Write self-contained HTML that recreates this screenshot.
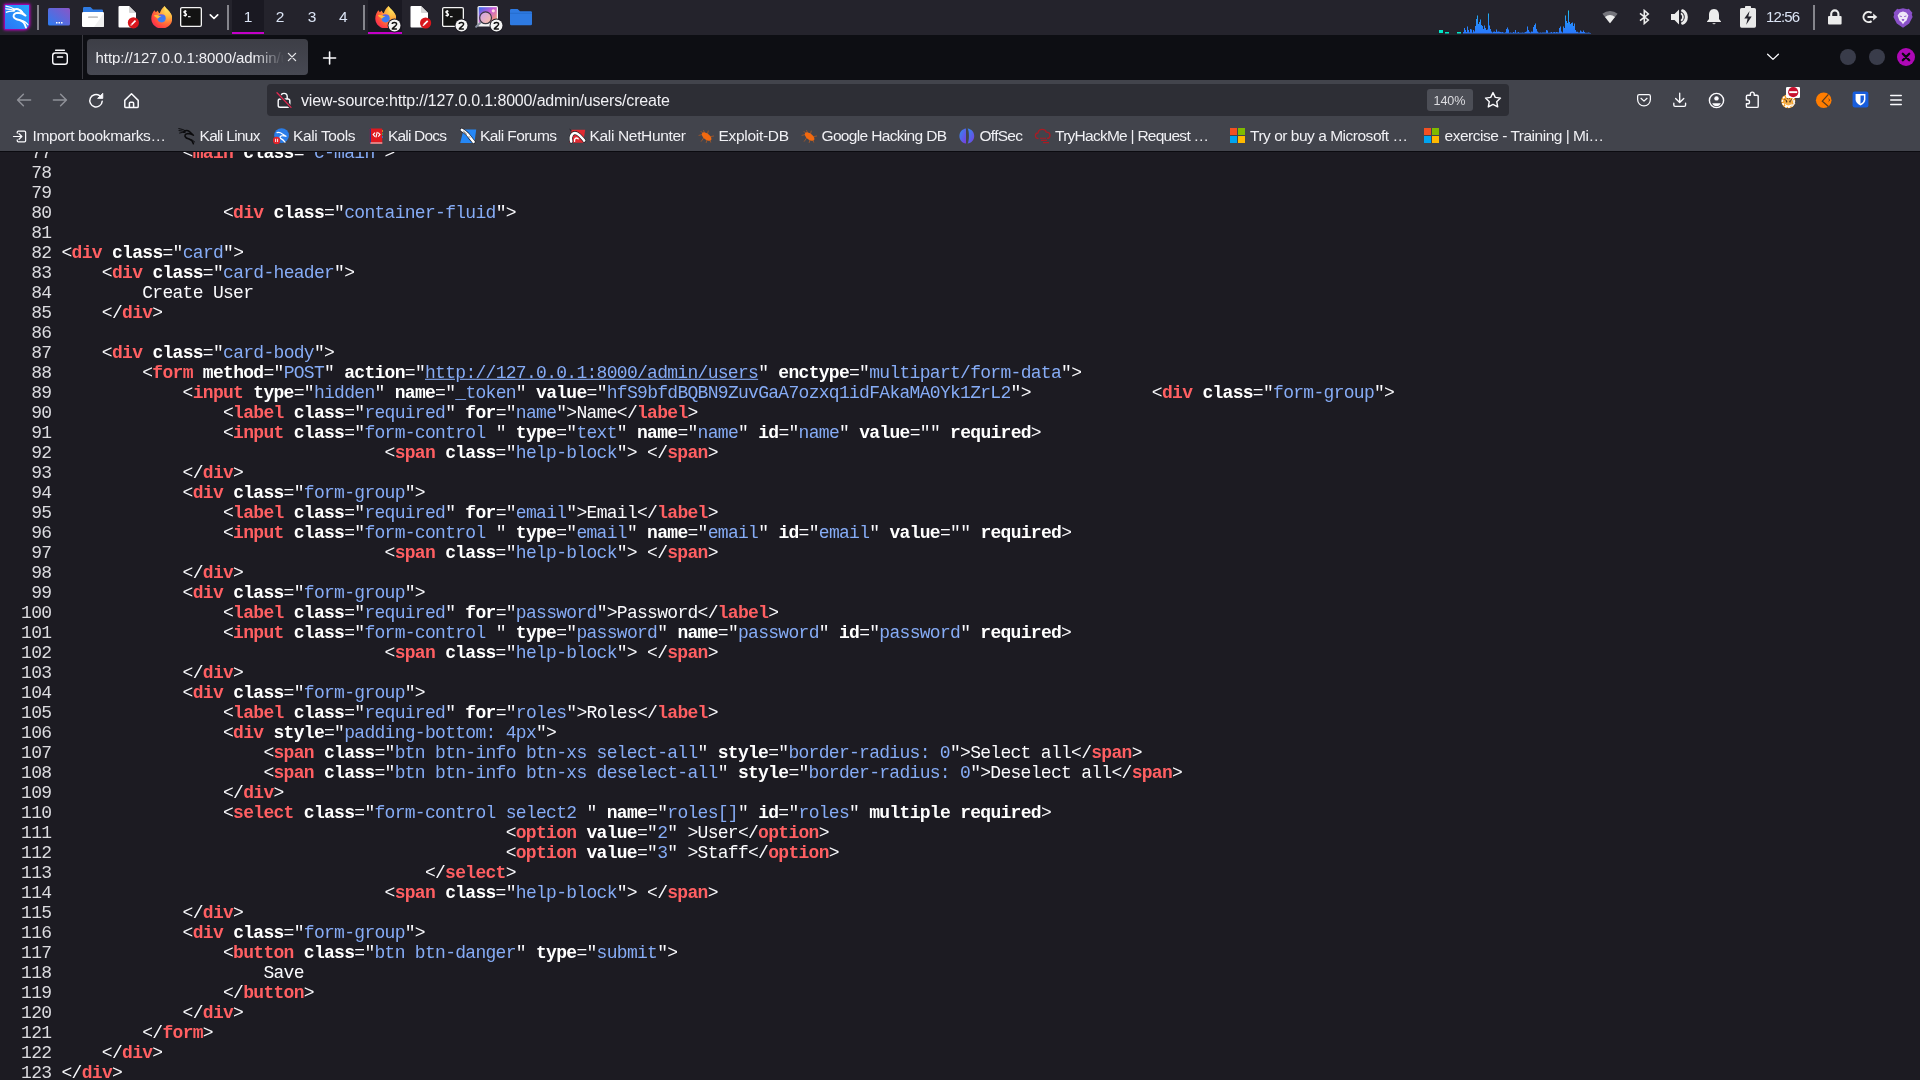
<!DOCTYPE html>
<html>
<head>
<meta charset="utf-8">
<title>view-source</title>
<style>
html,body{margin:0;padding:0;}
body{width:1920px;height:1080px;overflow:hidden;position:relative;background:#1c1b22;font-family:"Liberation Sans",sans-serif;}
#content{position:absolute;left:0;top:152px;width:1920px;height:928px;overflow:hidden;background:#1c1b22;}
#src{position:absolute;left:0;top:-9.2px;transform:scaleY(1.05263);transform-origin:0 0;margin:0;padding:0 0 0 21.1px;font-family:"Liberation Mono",monospace;font-size:18px;line-height:19px;color:#fbfbfe;white-space:pre;letter-spacing:-0.707px;}
#src b{font-weight:bold;color:#fff;}
#src b.t{color:#ff5f62;}
#src i{font-style:normal;color:#86acf6;}
#src u{text-decoration:underline;}
#src .n{color:#dcdce0;}
#panel{position:absolute;left:0;top:0;width:1920px;height:35px;background:#24232c;}
.a{position:absolute;display:block;}
.sep{position:absolute;top:5px;width:2px;height:25px;background:#85858c;}
#texts,#src{will-change:transform;}
.tx{position:absolute;white-space:pre;font-family:"Liberation Sans",sans-serif;}
#tabbar{position:absolute;left:0;top:35px;width:1920px;height:45px;background:#0d0e13;}
#nav{position:absolute;left:0;top:80px;width:1920px;height:71px;background:#42444c;}
#navline{position:absolute;left:0;top:151px;width:1920px;height:1px;background:#0b0b10;}
</style>
</head>
<body>
<svg width="0" height="0" style="position:absolute">
 <defs>
  <radialGradient id="gf1" cx=".8" cy=".2" r="1.050"><stop offset="0" stop-color="#ffe85a"/><stop offset=".3" stop-color="#ffb040"/><stop offset=".55" stop-color="#ff7139"/><stop offset=".8" stop-color="#ff3c42"/><stop offset="1" stop-color="#ea2a72"/></radialGradient>
  <linearGradient id="gf2" x1=".5" y1="0" x2=".5" y2="1"><stop offset="0" stop-color="#7a55dc"/><stop offset=".3" stop-color="#3f78f2"/><stop offset="1" stop-color="#3a80f5"/></linearGradient>
  <linearGradient id="gf3" x1=".5" y1="0" x2=".5" y2="1"><stop offset="0" stop-color="#fff36b"/><stop offset="1" stop-color="#ffa436"/></linearGradient>
  <symbol id="ffx" viewBox="0 0 21.500 22.500">
   <path d="M13.500,0C15,2.600 18.400,4.800 20,8C21.600,11 21.600,14.600 20,17.600C18,21 14.200,22.500 10.600,22.500C5,22.500 .3,18 .3,12.500C.3,9 1.800,6 3.500,4.200L4.800,6.300L6.800,4.500C7.200,6 7.900,6.900 8.800,7.300C9.500,5 11,2 13.500,0Z" fill="url(#gf1)"/>
   <path d="M13.500,0C15,2.600 18.400,4.800 20,8C21,10 21.400,12 21.200,14C20.600,10.600 17.400,9.600 15.600,7.600C14,5.800 13.300,3 13.500,0Z" fill="url(#gf3)" opacity=".9"/>
   <circle cx="10.600" cy="12.300" r="4.100" fill="url(#gf2)"/>
   <path d="M2.800,9.500C5,8.800 7,9.100 8.600,9.900L10.400,10.100C8.800,10.900 7.800,11.900 6.900,12.700C5.800,11.700 4,11.200 2.800,9.500Z" fill="#ffbe3a"/>
  </symbol>
  <symbol id="term" viewBox="0 0 22 20">
   <rect x=".65" y=".65" width="20.7" height="18.7" rx="1.300" fill="#131313" stroke="#f4f4f4" stroke-width="1.300"/>
   <path d="M6.600,4.400C5.800,3.700 3.800,3.800 3.800,5.100C3.800,6.500 6.600,6.000 6.600,7.500C6.600,8.900 4.400,8.900 3.600,8.100M5.200,3V9.800" fill="none" stroke="#fff" stroke-width="1.1"/>
   <path d="M8,9.700H10.600" stroke="#fff" stroke-width="1.1"/>
  </symbol>
  <symbol id="bdg" viewBox="0 0 15 15">
   <circle cx="7.500" cy="7.500" r="6.900" fill="#1b1a22"/>
   <circle cx="7.500" cy="7.500" r="6" fill="#f4f4f4"/>
   <path d="M5.200,6.000C5.300,3.900 9.700,3.900 9.600,6.200C9.500,7.700 6.800,8.800 5.300,10.900H9.900" fill="none" stroke="#111" stroke-width="1.500" stroke-linejoin="round"/>
  </symbol>
  <symbol id="ms" viewBox="0 0 15 15">
   <rect x="0" y="0" width="7" height="7" fill="#f25022"/><rect x="8" y="0" width="7" height="7" fill="#7fba00"/>
   <rect x="0" y="8" width="7" height="7" fill="#00a4ef"/><rect x="8" y="8" width="7" height="7" fill="#ffb900"/>
  </symbol>
  <symbol id="bug" viewBox="0 0 16 13">
   <ellipse cx="8.600" cy="6.600" rx="5.700" ry="3" transform="rotate(38 8.600 6.600)" fill="#f2690f"/>
   <path d="M4.500,4.500L1,5.400M5.600,8L3.300,11.300M9,9.800L8.200,12.600M11.600,9.400L12.700,12.200M12.600,6.600L15.800,6M9.600,3.600L10.200,1M6.600,3L5.600,.5M4.800,3.200L3,1.400" stroke="#f2690f" stroke-width=".8" fill="none" stroke-linecap="round" opacity=".6"/>
  </symbol>
 </defs>
</svg>
<div id="panel">
 <!-- kali menu -->
 <svg class="a" style="left:0;top:0" width="34" height="34" viewBox="-5 -5 34 34">
  <defs>
   <linearGradient id="gk" x1="0" y1="1" x2="1" y2="0"><stop offset="0" stop-color="#2a74f4"/><stop offset="1" stop-color="#27a6ff"/></linearGradient>
   <filter id="glow" x="-40%" y="-40%" width="180%" height="180%"><feGaussianBlur stdDeviation="1.5"/></filter>
  </defs>
  <path d="M-1,-1H25V18.500Q25,25 18.500,25H-1Z" fill="#d400d8" filter="url(#glow)"/>
  <path d="M-.7,-.7H24.700V18Q24.700,24.700 18,24.700H-.7Z" fill="#a000a8" opacity=".75"/>
  <path d="M0,0H24V18Q24,24 18,24H0Z" fill="url(#gk)"/>
  <g fill="none" stroke="#fff" stroke-linecap="round" stroke-linejoin="round">
   <path d="M1,1.200Q5.500,1.800 9.800,4.400M1,3.800Q5,4 9.400,5.400M1.400,7.200Q5,5.800 9,6.200" stroke-width="1.350"/>
   <path d="M9,4.600Q12,3.200 14.500,5L20.600,10.600Q17,8.200 13,7.800Q8.200,8.200 8.600,11.600Q9.600,14.200 14.500,15Q19.500,16.400 21,22.600" stroke-width="1.900"/>
   <path d="M15.500,15.300Q20.600,16 23,19.800" stroke-width="1.200"/>
   <path d="M14.200,4.600Q16.200,4.800 17.400,6.800" stroke-width="1.100"/>
  </g>
 </svg>
 <div class="sep" style="left:37px"></div>
 <!-- show desktop -->
 <svg class="a" style="left:48px;top:8px" width="22" height="18" viewBox="0 0 22 18">
  <defs><linearGradient id="gd" x1="0" y1="1" x2="1" y2="0"><stop offset="0" stop-color="#2b7df2"/><stop offset="1" stop-color="#8b55c6"/></linearGradient></defs>
  <rect x="0" y="0" width="22" height="17.5" rx="1.5" fill="url(#gd)"/>
  <rect x="8" y="14" width="1.5" height="1.5" fill="#fff"/><rect x="10.5" y="14" width="1.5" height="1.5" fill="#fff"/><rect x="13" y="14" width="1.5" height="1.5" fill="#fff"/>
 </svg>
 <!-- file manager -->
 <svg class="a" style="left:82px;top:7px" width="22" height="20" viewBox="0 0 22 20">
  <path d="M1,1.2Q1,0 2.2,0H8.5L11,2.6H19.8Q21,2.6 21,3.8V8H1Z" fill="#2f7be3"/>
  <rect x="0" y="5" width="22" height="15" rx="1.3" fill="#fff"/>
  <path d="M22,6V18.7Q22,20 20.7,20H12Z" fill="#f0f0f0"/>
  <rect x="6" y="9.3" width="10" height="1.7" rx=".85" fill="#c4c4c4"/>
 </svg>
 <!-- text editor -->
 <svg class="a" style="left:118px;top:6px" width="22" height="23" viewBox="0 0 22 23">
  <path d="M1.5,0H11L18,7V20.5Q18,21.5 17,21.5H1.5Q.5,21.5 .5,20.5V1Q.5,0 1.5,0Z" fill="#fff"/>
  <path d="M11,0L18,7H12Q11,7 11,6Z" fill="#d6d6d6"/>
  <circle cx="15.4" cy="16.8" r="5.6" fill="#d9161c"/>
  <path d="M13.700,18.500L17.500,14.700" stroke="#fff" stroke-width="1.700" stroke-linecap="butt"/><path d="M12.400,19.800L12.900,17.900L14.300,19.300Z" fill="#fff"/>
 </svg>
 <!-- firefox launcher -->
 <svg class="a" style="left:150.500px;top:5.800px" width="21.500" height="22.500" viewBox="0 0 21.500 22.500"><use href="#ffx"/></svg>
 <!-- terminal launcher -->
 <svg class="a" style="left:180px;top:7px" width="22" height="20" viewBox="0 0 22 20"><use href="#term"/></svg>
 <svg class="a" style="left:209px;top:13px" width="10" height="7" viewBox="0 0 10 7"><path d="M1.300,1.900L5,5.500L8.700,1.900" fill="none" stroke="#fff" stroke-width="1.7" stroke-linecap="round" stroke-linejoin="round"/></svg>
 <div class="sep" style="left:227px"></div>
 <div class="a" style="left:232px;top:0;width:32px;height:32px;background:#1a1922"></div>
 <div class="a" style="left:232px;top:32px;width:32px;height:2px;background:#c400c8"></div>
 <div class="sep" style="left:363px"></div>
 <div class="a" style="left:368px;top:0;width:34px;height:32px;background:#1a1922"></div>
 <div class="a" style="left:368px;top:32px;width:34px;height:2px;background:#c400c8"></div>
 <svg class="a" style="left:374.500px;top:5.800px" width="21.500" height="22.500" viewBox="0 0 21.500 22.500"><use href="#ffx"/></svg>
 <svg class="a" style="left:387px;top:18px" width="15" height="15" viewBox="0 0 15 15"><use href="#bdg"/></svg>
 <!-- text editor task -->
 <svg class="a" style="left:410px;top:6px" width="22" height="23" viewBox="0 0 22 23">
  <path d="M1.5,0H11L18,7V20.5Q18,21.5 17,21.5H1.5Q.5,21.5 .5,20.5V1Q.5,0 1.5,0Z" fill="#fff"/>
  <path d="M11,0L18,7H12Q11,7 11,6Z" fill="#d6d6d6"/>
  <circle cx="15.6" cy="17" r="5.6" fill="#d9161c"/>
  <path d="M13.900,18.700L17.700,14.900" stroke="#fff" stroke-width="1.700" stroke-linecap="butt"/><path d="M12.600,20L13.100,18.100L14.500,19.500Z" fill="#fff"/>
 </svg>
 <svg class="a" style="left:442px;top:7px" width="22" height="20" viewBox="0 0 22 20"><use href="#term"/></svg>
 <svg class="a" style="left:454px;top:18px" width="15" height="15" viewBox="0 0 15 15"><use href="#bdg"/></svg>
 <!-- image viewer -->
 <svg class="a" style="left:475px;top:5px" width="26" height="24" viewBox="0 0 26 24">
  <defs><linearGradient id="gi" x1="0" y1="0" x2="1" y2="1"><stop offset="0" stop-color="#2f6df0"/><stop offset=".45" stop-color="#c85ad8"/><stop offset="1" stop-color="#ffb45a"/></linearGradient>
  <linearGradient id="gm" x1="0" y1="0" x2="1" y2="1"><stop offset="0" stop-color="#c9a0f0"/><stop offset="1" stop-color="#ffc0a0"/></linearGradient></defs>
  <rect x="2.5" y="1" width="20.5" height="20.5" rx="1.5" fill="#f4f4f4"/>
  <rect x="3.7" y="2.2" width="18.1" height="15.5" fill="url(#gi)"/>
  <circle cx="18.3" cy="5.8" r="1.6" fill="#ffd8e0"/>
  <path d="M1.2,21.8L6.2,17" stroke="#8a8fa0" stroke-width="2" stroke-linecap="round"/>
  <circle cx="10.6" cy="12.8" r="5.9" fill="url(#gm)" stroke="#3a3a44" stroke-width="1.2"/>
 </svg>
 <svg class="a" style="left:489px;top:18px" width="15" height="15" viewBox="0 0 15 15"><use href="#bdg"/></svg>
 <!-- folder -->
 <svg class="a" style="left:510px;top:9px" width="22" height="17" viewBox="0 0 22 17">
  <path d="M0,1.3Q0,0 1.3,0H7.6L10,2.3H20.7Q22,2.3 22,3.6V15Q22,16.3 20.7,16.3H1.3Q0,16.3 0,15Z" fill="#2e7ae2"/>
  <path d="M0,4.3H22" stroke="#2569c8" stroke-width=".8"/>
 </svg>
 <!-- cpu graph -->
 <svg class="a" style="left:1436px;top:7.400px" width="158" height="27" viewBox="1436 8 158 27">
  <defs><linearGradient id="gc" x1="0" y1="1" x2="0" y2="0"><stop offset="0" stop-color="#2a78ff"/><stop offset=".55" stop-color="#2590fa"/><stop offset="1" stop-color="#1fc4ee"/></linearGradient></defs>
  <rect x="1439" y="31" width="4" height="3" fill="#00e8c8"/><rect x="1445" y="33" width="4" height="1.5" fill="#00e8c8"/><rect x="1457" y="33" width="4" height="1.5" fill="#00e8c8"/>
  <path id="cpup" d="M1463,34.6V33.0h1V29.0h1V31.0h1V33.0h1V27.5h1V31.0h1V33.2h1V30.0h1V30.5h1V33.4h1V31.0h1V32.6h1V27.0h1V20.0h1V16.5h1V25.0h1V23.0h1V20.5h1V26.0h1V27.0h1V30.0h1V26.5h1V29.0h1V31.0h1V30.5h1V14.5h1V26.5h1V30.0h1V32.6h1V33.6h1V32.8h1V32.6h1V33.0h1V30.5h1V32.8h1V32.6h1V32.8h1V33.0h1V33.2h1V33.0h1V33.4h1V33.8h1V33.2h1V30.0h1V28.5h1V30.5h1V33.8h1V33.4h1V33.8h1V33.8h1V33.0h1V33.4h1V31.0h1V33.8h1V33.4h1V33.0h1V33.8h1V33.8h1V33.8h1V33.4h1V33.8h1V33.4h1V33.0h1V32.6h1V27.5h1V31.0h1V32.8h1V33.4h1V32.6h1V32.8h1V28.0h1V26.0h1V24.5h1V30.0h1V32.6h1V33.4h1V33.8h1V33.6h1V33.8h1V33.6h1V33.4h1V33.4h1V33.4h1V31.0h1V31.5h1V33.8h1V33.8h1V33.6h1V33.0h1V33.8h1V33.2h1V33.0h1V33.6h1V33.0h1V33.2h1V33.4h1V29.0h1V27.5h1V32.6h1V33.6h1V27.5h1V29.0h1V16.5h1V22.0h1V24.0h1V11.5h1V23.0h1V25.0h1V24.0h1V23.5h1V27.0h1V24.5h1V31.0h1V32.8h1V32.8h1V33.6h1V33.6h1V31.5h1V32.5h1V33.0h1V31.5h1V33.0h1V33.8h1V33.8h1V33.8h1V33.4h1V33.8h1V34.0h1V34.6Z" fill="url(#gc)"/>
 </svg>
 <!-- wifi -->
 <svg class="a" style="left:1602px;top:10px" width="16" height="14" viewBox="0 0 16 14">
  <path d="M8,13.2L.4,3.8A12,12 0 0 1 15.6,3.8Z" fill="#75757c"/>
  <path d="M8,13.2L3,7A8,8 0 0 1 13,7Z" fill="#ececec"/>
 </svg>
 <!-- bluetooth -->
 <svg class="a" style="left:1638px;top:9px" width="13" height="16" viewBox="0 0 13 16">
  <path d="M2,4.3L10.3,11L6.3,14.5V1.5L10.3,5L2,11.7" fill="none" stroke="#ececec" stroke-width="1.6" stroke-linejoin="miter"/>
 </svg>
 <!-- volume -->
 <svg class="a" style="left:1670px;top:8px" width="19" height="18" viewBox="0 0 19 18">
  <path d="M1,6H4.5L9,1.5V16.5L4.5,12H1Z" fill="#ececec"/>
  <path d="M11,5.2A4.6,4.6 0 0 1 11,12.8" fill="none" stroke="#ececec" stroke-width="1.8"/>
  <path d="M11.2,1.4A8.2,8.2 0 0 1 11.2,16.6L11.2,14.6A6.2,6.2 0 0 0 11.2,3.4Z" fill="#ececec"/>
  <path d="M12,2A7.6,7.6 0 0 1 12,16" fill="none" stroke="#ececec" stroke-width="2.4"/>
 </svg>
 <!-- bell -->
 <svg class="a" style="left:1706px;top:8px" width="16" height="18" viewBox="0 0 16 18">
  <path d="M8,1C4.4,1 3,4 3,7V11L1,13.6V14H15V13.6L13,11V7C13,4 11.6,1 8,1Z" fill="#ececec"/>
  <path d="M6.3,15.3A1.8,1.4 0 0 0 9.7,15.3Z" fill="#ececec"/>
 </svg>
 <!-- battery -->
 <svg class="a" style="left:1740px;top:5px" width="16" height="23" viewBox="0 0 16 23">
  <rect x="0" y="3" width="16" height="19.7" rx="1.6" fill="#e9e9e9"/>
  <rect x="5" y="1" width="6" height="3" rx=".8" fill="#e9e9e9"/>
  <path d="M9.6,6L4.3,13.4H7.6L6.2,19.8L11.7,11.6H8.3Z" fill="#24232c"/>
 </svg>
 <div class="sep" style="left:1813px"></div>
 <!-- lock -->
 <svg class="a" style="left:1827px;top:8px" width="16" height="18" viewBox="0 0 16 18">
  <rect x="1" y="8" width="13.6" height="8.6" rx="1" fill="#ececec"/>
  <path d="M4.2,9V6A3.6,3.6 0 0 1 11.4,6V9" fill="none" stroke="#ececec" stroke-width="2.1"/>
 </svg>
 <!-- logout -->
 <svg class="a" style="left:1861px;top:9px" width="18" height="16" viewBox="0 0 18 16">
  <path d="M10.6,3.9A5.1,5.1 0 1 0 10.6,12.1" fill="none" stroke="#ececec" stroke-width="2"/>
  <path d="M6.5,8H13" stroke="#ececec" stroke-width="2"/>
  <path d="M12.2,4.6L16.3,8L12.2,11.4Z" fill="#ececec"/>
 </svg>
 <!-- lion -->
 <svg class="a" style="left:1892px;top:8px" width="22" height="20" viewBox="0 0 22 20">
  <path d="M11,.3L15.2,1.2L16.8,.8L20.4,4.8L19.8,6.6L20.6,9L17.2,15.6L11,19.7L4.8,15.6L1.4,9L2.2,6.6L1.6,4.8L5.2,.8L6.8,1.2Z" fill="#8a50c8"/>
  <path d="M11,3.6L14.2,4.4L16.4,7.6L14.6,12.4L12.4,14.2L11,16.2L9.6,14.2L7.4,12.4L5.6,7.6L7.8,4.4Z" fill="#efe6f8"/>
  <path d="M7.6,8L9.8,8.6M14.4,8L12.2,8.6M10,11.6H12L11,12.8Z" stroke="#8a50c8" stroke-width=".9" fill="#8a50c8"/>
 </svg>
</div>
<div id="tabbar">
 <!-- firefox view -->
 <svg class="a" style="left:51px;top:13px" width="18" height="18" viewBox="0 0 18 18">
  <path d="M4.600,2.200H13.400" stroke="#fbfbfe" stroke-width="1.400" stroke-linecap="round"/>
  <rect x="1.700" y="5" width="14.600" height="11.300" rx="2.600" fill="none" stroke="#fbfbfe" stroke-width="1.400"/>
  <path d="M6.600,9H11.400" stroke="#fbfbfe" stroke-width="1.700" stroke-linecap="round"/>
 </svg>
 <div class="a" style="left:82px;top:0;width:1px;height:44px;background:#38383f"></div>
 <div class="a" style="left:87px;top:4px;width:221px;height:36px;border-radius:4px;background:linear-gradient(#3d3e46,#474953)"></div>
 <svg class="a" style="left:286px;top:16px" width="12" height="12" viewBox="0 0 12 12"><path d="M2.400,2.400L9.600,9.600M9.600,2.400L2.400,9.600" stroke="#e8e8ec" stroke-width="1.300" stroke-linecap="round"/></svg>
 <svg class="a" style="left:322px;top:15px" width="16" height="16" viewBox="0 0 16 16"><path d="M1.600,8H13.600M7.600,2V14" stroke="#fbfbfe" stroke-width="1.600" stroke-linecap="round"/></svg>
 <svg class="a" style="left:1765px;top:17px" width="16" height="10" viewBox="0 0 16 10"><path d="M2.600,2.200L8,7.400L13.400,2.200" fill="none" stroke="#fbfbfe" stroke-width="1.300" stroke-linecap="round" stroke-linejoin="round"/></svg>
 <div class="a" style="left:1840px;top:14px;width:16px;height:16px;border-radius:8px;background:#393c4a"></div>
 <div class="a" style="left:1869px;top:14px;width:16px;height:16px;border-radius:8px;background:#393c4a"></div>
 <div class="a" style="left:1897px;top:13px;width:18px;height:18px;border-radius:9px;background:#ae08b6"></div>
 <svg class="a" style="left:1898px;top:14px" width="16" height="16" viewBox="0 0 16 16"><path d="M4.800,4.800L11.200,11.200M11.200,4.800L4.800,11.200" stroke="#0a0a0e" stroke-width="2.300" stroke-linecap="round"/></svg>
</div>
<div id="nav">
 <!-- back / forward / reload / home : coordinates relative to nav (top=80) -->
 <svg class="a" style="left:16px;top:12px" width="16" height="16" viewBox="0 0 16 16"><path d="M14.600,8H1.800M7.400,2.200L1.600,8L7.400,13.800" fill="none" stroke="#8f9198" stroke-width="1.500" stroke-linecap="round" stroke-linejoin="round"/></svg>
 <svg class="a" style="left:52px;top:12px" width="16" height="16" viewBox="0 0 16 16"><path d="M1.400,8H14.200M8.600,2.200L14.400,8L8.600,13.800" fill="none" stroke="#8f9198" stroke-width="1.500" stroke-linecap="round" stroke-linejoin="round"/></svg>
 <svg class="a" style="left:88px;top:12px" width="17" height="17" viewBox="0 0 17 17">
  <path d="M14.200,9.200A6.200,6.200 0 1 1 11.600,3.600" fill="none" stroke="#fbfbfe" stroke-width="1.500" stroke-linecap="round"/>
  <path d="M14.800,1.200V6.400H9.600Z" fill="#fbfbfe" stroke="#fbfbfe" stroke-width=".8" stroke-linejoin="round"/>
 </svg>
 <svg class="a" style="left:123px;top:12px" width="17" height="17" viewBox="0 0 17 17">
  <path d="M1.800,8.400L8.500,1.800L15.200,8.400V14.400Q15.200,15.600 14,15.600H3Q1.800,15.600 1.800,14.400Z" fill="none" stroke="#fbfbfe" stroke-width="1.500" stroke-linejoin="round"/>
  <path d="M6.400,15.600V11.200Q6.400,10.200 7.400,10.200H9.600Q10.600,10.200 10.600,11.200V15.600" fill="none" stroke="#fbfbfe" stroke-width="1.500"/>
 </svg>
 <!-- url bar -->
 <div class="a" style="left:267px;top:4px;width:1242px;height:32px;border-radius:4px;background:#2d2e35"></div>
 <svg class="a" style="left:275px;top:11px" width="18" height="18" viewBox="0 0 18 18">
  <rect x="3.200" y="8" width="11.600" height="8.200" rx="1.800" fill="none" stroke="#fbfbfe" stroke-width="1.400"/>
  <path d="M5.800,8V5.600A3.200,3.200 0 0 1 12.200,5.600V8" fill="none" stroke="#fbfbfe" stroke-width="1.400"/>
  <path d="M2,1.800L16,16.400" stroke="#2d2e35" stroke-width="3.200"/>
  <path d="M2,1.800L16,16.400" stroke="#e22850" stroke-width="1.300" stroke-linecap="round"/>
 </svg>
 <div class="a" style="left:1427px;top:9px;width:46px;height:22px;border-radius:3px;background:#4c4e56"></div>
 <svg class="a" style="left:1484px;top:11px" width="18" height="18" viewBox="0 0 18 18">
  <path d="M9,1.600L11.300,6.400L16.500,7.100L12.700,10.700L13.700,15.900L9,13.400L4.300,15.900L5.300,10.700L1.500,7.100L6.700,6.400Z" fill="none" stroke="#fbfbfe" stroke-width="1.400" stroke-linejoin="round"/>
 </svg>
 <!-- pocket -->
 <svg class="a" style="left:1636px;top:12.700px" width="16" height="14.200" viewBox="0 0 18 16">
  <path d="M3.600,1.800H14.400Q16.200,1.800 16.200,3.600V7.400A7.200,7.200 0 0 1 1.800,7.400V3.600Q1.800,1.800 3.600,1.800Z" fill="none" stroke="#fbfbfe" stroke-width="1.400"/>
  <path d="M5.600,6L9,9.200L12.400,6" fill="none" stroke="#fbfbfe" stroke-width="1.400" stroke-linecap="round" stroke-linejoin="round"/>
 </svg>
 <!-- download -->
 <svg class="a" style="left:1671.800px;top:11.600px" width="15.400" height="16.300" viewBox="0 0 17 18">
  <path d="M8.500,1.400V11.400M4,7.200L8.500,11.600L13,7.200" fill="none" stroke="#fbfbfe" stroke-width="1.500" stroke-linecap="round" stroke-linejoin="round"/>
  <path d="M2,12.400V14.400Q2,15.800 3.400,15.800H13.600Q15,15.800 15,14.400V12.400" fill="none" stroke="#fbfbfe" stroke-width="1.500" stroke-linecap="round"/>
 </svg>
 <!-- account -->
 <svg class="a" style="left:1708px;top:12px" width="17" height="17" viewBox="0 0 17 17">
  <circle cx="8.500" cy="8.500" r="7.100" fill="none" stroke="#fbfbfe" stroke-width="1.400"/>
  <circle cx="8.500" cy="6.400" r="2.200" fill="#fbfbfe"/>
  <path d="M4.200,11.200H12.800A4.600,4.600 0 0 1 4.200,11.200Z" fill="#fbfbfe"/>
 </svg>
 <!-- extensions -->
 <svg class="a" style="left:1744px;top:11px" width="17" height="18" viewBox="0 0 17 18">
  <path d="M6.400,4.200V3A1.900,1.900 0 0 1 10.200,3V4.200H13Q14.200,4.200 14.200,5.400V15.200Q14.200,16.400 13,16.400H3.600Q2.400,16.400 2.400,15.200V12.800H3.600A1.900,1.900 0 0 0 3.600,9H2.400V5.400Q2.400,4.200 3.600,4.200Z" fill="none" stroke="#fbfbfe" stroke-width="1.400" stroke-linejoin="round"/>
 </svg>
 <!-- tiger + blocked badge (nav-relative) -->
 <svg class="a" style="left:1779px;top:5px" width="24" height="26" viewBox="1779 85 24 26">
  <circle cx="1788.300" cy="101.300" r="7" fill="#f59a1a"/>
  <circle cx="1788.300" cy="101.300" r="5.900" fill="none" stroke="#fff" stroke-width="1.600" stroke-dasharray="2.200 1.300"/>
  <circle cx="1788.300" cy="102" r="4.300" fill="#f7b14a"/>
  <path d="M1784.600,103.600Q1788.300,107.400 1792,103.600L1791,106Q1788.300,107.800 1785.600,106Z" fill="#fff"/>
  <path d="M1784.400,99.400L1787,100.800M1792.200,99.400L1789.600,100.800M1786.800,97.400L1787.600,99.200M1789.800,97.400L1789,99.200" stroke="#5a3a1a" stroke-width=".9" fill="none"/>
  <circle cx="1786.600" cy="101.800" r=".8" fill="#3a2a1a"/><circle cx="1790" cy="101.800" r=".8" fill="#3a2a1a"/>
  <path d="M1792.400,99L1794.600,103.400L1791.600,106.400" fill="none" stroke="#e8e8e8" stroke-width="1.200"/>
  <rect x="1786" y="86.900" width="14" height="11" rx="1.200" fill="#fdfdfd"/>
  <circle cx="1793.200" cy="92.200" r="5.100" fill="#c8102e"/>
  <rect x="1789.200" y="91.200" width="8" height="1.900" fill="#fff"/>
 </svg>
 <!-- orange circle -->
 <svg class="a" style="left:1815px;top:11px" width="18" height="18" viewBox="1815 91 18 18">
  <circle cx="1823.700" cy="100.200" r="7.800" fill="#ff7d00"/>
  <path d="M1828.400,94.300L1822.300,101.200L1828.400,106.500" fill="none" stroke="#5a3c1c" stroke-width="1.250" stroke-linejoin="miter"/>
  <path d="M1828.700,98.800A1.500,1.500 0 0 1 1828.700,101.400" fill="none" stroke="#5a3c1c" stroke-width="1"/>
 </svg>
 <!-- bitwarden -->
 <svg class="a" style="left:1851.500px;top:11.400px" width="17" height="17" viewBox="0 0 18 18">
  <rect x=".6" y=".6" width="16.800" height="16.800" rx="2.400" fill="#175ddc"/>
  <path d="M3.800,3.200H14.200V9Q14.200,12.800 9,15.400Q3.800,12.800 3.800,9Z" fill="#fff"/>
  <path d="M9,4.800H12.600V9Q12.600,11.600 9,13.600Z" fill="#175ddc"/>
 </svg>
 <!-- hamburger -->
 <svg class="a" style="left:1888px;top:12px" width="16" height="16" viewBox="0 0 16 16"><path d="M2.700,3.500H13.300M2.700,8H13.300M2.700,12.500H13.300" stroke="#fbfbfe" stroke-width="1.400" stroke-linecap="round"/></svg>

 <!-- bookmarks bar icons (nav-relative: y = abs-80) -->
 <svg class="a" style="left:12px;top:49.500px" width="16" height="13" viewBox="0 0 17 14.600">
  <path d="M5.400,3.400V2.600Q5.400,1.400 6.600,1.400H13.600Q14.800,1.400 14.800,2.600V12Q14.800,13.200 13.600,13.200H6.600Q5.400,13.200 5.400,12V11.200" fill="none" stroke="#fbfbfe" stroke-width="1.400" stroke-linecap="round"/>
  <path d="M1.200,7.300H10.400M7.400,4.200L10.600,7.300L7.400,10.400" fill="none" stroke="#fbfbfe" stroke-width="1.400" stroke-linecap="round" stroke-linejoin="round"/>
 </svg>
 <!-- kali linux dragon (black) -->
 <svg class="a" style="left:178px;top:47px" width="18" height="18" viewBox="0 0 18 18">
  <g fill="none" stroke="#0a0a0c" stroke-linecap="round" stroke-linejoin="round">
   <path d="M.8,1.600Q4.400,2 7.600,3.800M1,3.600Q4,3.800 7.200,4.800M1.600,6Q4.200,5.200 7,5.400" stroke-width="1"/>
   <path d="M7,3.800Q9.400,3 11.200,4.400L15.400,8.200Q12.800,6.600 10,6.400Q6.600,6.800 7,9.400Q7.800,11.400 11,12Q14.600,13 15.400,16.800" stroke-width="1.500"/>
   <path d="M11.600,12.200Q15,12.800 16.800,15" stroke-width=".9"/>
  </g>
 </svg>
 <!-- kali tools -->
 <svg class="a" style="left:272px;top:47px" width="18" height="18" viewBox="0 0 18 18">
  <circle cx="9.600" cy="8.600" r="7.400" fill="#2a7de8"/>
  <path d="M5,5.600Q8,5 10,6.800L14.400,9.400Q11.600,8.600 9.600,8.800Q7.200,9.400 8.600,11.400Q11,12.600 13,15.200" fill="none" stroke="#fff" stroke-width="1.200" stroke-linecap="round"/>
  <circle cx="4.600" cy="13.400" r="3.600" fill="#e3242b"/>
  <path d="M3.600,11.800V15M5.600,11.800V15" stroke="#fff" stroke-width=".9"/>
 </svg>
 <!-- kali docs -->
 <svg class="a" style="left:369px;top:48px" width="15" height="17" viewBox="369 128 15 17">
  <path d="M370.600,128.400H381.600Q382.300,128.400 382.300,129.100V143.800H370.600Q369.800,143.800 369.800,143V129.200Q369.800,128.400 370.600,128.400Z" fill="#e0191f"/>
  <rect x="369.800" y="128.600" width="1.100" height="14.600" fill="#20398c"/>
  <rect x="370.400" y="142.500" width="11.900" height="1" fill="#f0dede"/>
  <rect x="382" y="130" width=".8" height="2" fill="#f39a1c"/><rect x="382" y="133" width=".8" height="2" fill="#3fae49"/><rect x="382" y="136" width=".8" height="2" fill="#2f7de0"/>
  <path d="M375,132.600L373.200,134.600L375,136.600M378.200,132.600L380,134.600L378.200,136.600M377.300,131.800L375.900,137.400" fill="none" stroke="#fff" stroke-width="1.150"/>
 </svg>
 <!-- kali forums -->
 <svg class="a" style="left:458px;top:46px" width="20" height="20" viewBox="458 126 20 20">
  <path d="M463.600,129.600H476.200L474.400,143H460.200Z" fill="#2587f5"/>
  <path d="M461.800,129.800C464,131 466,132.600 467.800,134.600C469.600,136.800 471.400,139.400 473.600,141.800" fill="none" stroke="#1a1a22" stroke-width="3.800" stroke-linecap="round"/>
  <path d="M461.800,129.800C464,131 466,132.600 467.800,134.600C469.600,136.800 471.400,139.400 473.600,141.800" fill="none" stroke="#fff" stroke-width="2.600" stroke-linecap="round"/>
  <path d="M463.400,131.200L466.800,134.400M469,136.400L470,137.600" stroke="#1a1a22" stroke-width=".7" fill="none"/>
 </svg>
 <!-- nethunter -->
 <svg class="a" style="left:568px;top:48px" width="19" height="16" viewBox="568 128 19 16">
  <path d="M571.500,129.800H585.200L583.200,142.700H569.300Z" fill="#e02a32"/>
  <path d="M571.300,141.600C569.400,135.600 573,131.600 577.200,133.600C580.200,135 582,138 584.200,140.600" fill="none" stroke="#1c1c24" stroke-width="3.800" stroke-linecap="round"/>
  <path d="M571.300,141.600C569.400,135.600 573,131.600 577.200,133.600C580.200,135 582,138 584.200,140.600" fill="none" stroke="#fff" stroke-width="2.500" stroke-linecap="round"/>
  <path d="M574.600,141.400C574,138.600 576,137 578.200,138.800" fill="none" stroke="#fff" stroke-width="1.300" stroke-linecap="round"/>
  <path d="M569.600,129.200L571.600,131" stroke="#1c1c24" stroke-width="1"/>
 </svg>
 <svg class="a" style="left:697.500px;top:49.500px" width="16" height="13" viewBox="0 0 16 13"><use href="#bug"/></svg>
 <svg class="a" style="left:800.700px;top:49.500px" width="16" height="13" viewBox="0 0 16 13"><use href="#bug"/></svg>
 <!-- offsec -->
 <svg class="a" style="left:958px;top:47px" width="18" height="18" viewBox="0 0 18 18">
  <defs><linearGradient id="go" x1="0" y1="0" x2="1" y2="1"><stop offset="0" stop-color="#2f8cf0"/><stop offset="1" stop-color="#7a3ce0"/></linearGradient></defs>
  <path d="M8,1.400C4,2 1.400,5 1.400,9C1.400,13 4,16 8,16.600Z" fill="url(#go)"/>
  <path d="M9.600,1.400C13.600,2 16.200,5 16.200,9C16.200,13 13.600,16 9.600,16.600C11.400,14 11.400,4 9.600,1.400Z" fill="url(#go)"/>
 </svg>
 <!-- tryhackme -->
 <svg class="a" style="left:1034px;top:47px" width="18" height="18" viewBox="0 0 18 18">
  <path d="M4.600,11.400Q1.400,11.400 1.400,8.600Q1.400,6.200 4,6Q4.600,2.400 8.200,2.400Q11.400,2.400 12.400,5.200Q16,5.200 16,8.400Q16,11.400 13,11.400" fill="none" stroke="#a81c24" stroke-width="1.300"/>
  <path d="M6,11.200H12M7,13.400H13M9,15.600H15" stroke="#a81c24" stroke-width="1.100"/>
 </svg>
 <svg class="a" style="left:1230px;top:48px" width="15" height="15" viewBox="0 0 15 15"><use href="#ms"/></svg>
 <svg class="a" style="left:1424px;top:48px" width="15" height="15" viewBox="0 0 15 15"><use href="#ms"/></svg>
</div>
<div id="navline"></div>
<div id="content"><pre id="src"><span class="n"> 77</span>             &lt;<b class="t">main</b> <b>class</b>=&quot;<i>c-main</i>&quot;&gt;
<span class="n"> 78</span> 
<span class="n"> 79</span> 
<span class="n"> 80</span>                 &lt;<b class="t">div</b> <b>class</b>=&quot;<i>container-fluid</i>&quot;&gt;
<span class="n"> 81</span> 
<span class="n"> 82</span> &lt;<b class="t">div</b> <b>class</b>=&quot;<i>card</i>&quot;&gt;
<span class="n"> 83</span>     &lt;<b class="t">div</b> <b>class</b>=&quot;<i>card-header</i>&quot;&gt;
<span class="n"> 84</span>         Create User
<span class="n"> 85</span>     &lt;/<b class="t">div</b>&gt;
<span class="n"> 86</span> 
<span class="n"> 87</span>     &lt;<b class="t">div</b> <b>class</b>=&quot;<i>card-body</i>&quot;&gt;
<span class="n"> 88</span>         &lt;<b class="t">form</b> <b>method</b>=&quot;<i>POST</i>&quot; <b>action</b>=&quot;<i><u>http://127.0.0.1:8000/admin/users</u></i>&quot; <b>enctype</b>=&quot;<i>multipart/form-data</i>&quot;&gt;
<span class="n"> 89</span>             &lt;<b class="t">input</b> <b>type</b>=&quot;<i>hidden</i>&quot; <b>name</b>=&quot;<i>_token</i>&quot; <b>value</b>=&quot;<i>hfS9bfdBQBN9ZuvGaA7ozxq1idFAkaMA0Yk1ZrL2</i>&quot;&gt;            &lt;<b class="t">div</b> <b>class</b>=&quot;<i>form-group</i>&quot;&gt;
<span class="n"> 90</span>                 &lt;<b class="t">label</b> <b>class</b>=&quot;<i>required</i>&quot; <b>for</b>=&quot;<i>name</i>&quot;&gt;Name&lt;/<b class="t">label</b>&gt;
<span class="n"> 91</span>                 &lt;<b class="t">input</b> <b>class</b>=&quot;<i>form-control </i>&quot; <b>type</b>=&quot;<i>text</i>&quot; <b>name</b>=&quot;<i>name</i>&quot; <b>id</b>=&quot;<i>name</i>&quot; <b>value</b>=&quot;<i></i>&quot; <b>required</b>&gt;
<span class="n"> 92</span>                                 &lt;<b class="t">span</b> <b>class</b>=&quot;<i>help-block</i>&quot;&gt; &lt;/<b class="t">span</b>&gt;
<span class="n"> 93</span>             &lt;/<b class="t">div</b>&gt;
<span class="n"> 94</span>             &lt;<b class="t">div</b> <b>class</b>=&quot;<i>form-group</i>&quot;&gt;
<span class="n"> 95</span>                 &lt;<b class="t">label</b> <b>class</b>=&quot;<i>required</i>&quot; <b>for</b>=&quot;<i>email</i>&quot;&gt;Email&lt;/<b class="t">label</b>&gt;
<span class="n"> 96</span>                 &lt;<b class="t">input</b> <b>class</b>=&quot;<i>form-control </i>&quot; <b>type</b>=&quot;<i>email</i>&quot; <b>name</b>=&quot;<i>email</i>&quot; <b>id</b>=&quot;<i>email</i>&quot; <b>value</b>=&quot;<i></i>&quot; <b>required</b>&gt;
<span class="n"> 97</span>                                 &lt;<b class="t">span</b> <b>class</b>=&quot;<i>help-block</i>&quot;&gt; &lt;/<b class="t">span</b>&gt;
<span class="n"> 98</span>             &lt;/<b class="t">div</b>&gt;
<span class="n"> 99</span>             &lt;<b class="t">div</b> <b>class</b>=&quot;<i>form-group</i>&quot;&gt;
<span class="n">100</span>                 &lt;<b class="t">label</b> <b>class</b>=&quot;<i>required</i>&quot; <b>for</b>=&quot;<i>password</i>&quot;&gt;Password&lt;/<b class="t">label</b>&gt;
<span class="n">101</span>                 &lt;<b class="t">input</b> <b>class</b>=&quot;<i>form-control </i>&quot; <b>type</b>=&quot;<i>password</i>&quot; <b>name</b>=&quot;<i>password</i>&quot; <b>id</b>=&quot;<i>password</i>&quot; <b>required</b>&gt;
<span class="n">102</span>                                 &lt;<b class="t">span</b> <b>class</b>=&quot;<i>help-block</i>&quot;&gt; &lt;/<b class="t">span</b>&gt;
<span class="n">103</span>             &lt;/<b class="t">div</b>&gt;
<span class="n">104</span>             &lt;<b class="t">div</b> <b>class</b>=&quot;<i>form-group</i>&quot;&gt;
<span class="n">105</span>                 &lt;<b class="t">label</b> <b>class</b>=&quot;<i>required</i>&quot; <b>for</b>=&quot;<i>roles</i>&quot;&gt;Roles&lt;/<b class="t">label</b>&gt;
<span class="n">106</span>                 &lt;<b class="t">div</b> <b>style</b>=&quot;<i>padding-bottom: 4px</i>&quot;&gt;
<span class="n">107</span>                     &lt;<b class="t">span</b> <b>class</b>=&quot;<i>btn btn-info btn-xs select-all</i>&quot; <b>style</b>=&quot;<i>border-radius: 0</i>&quot;&gt;Select all&lt;/<b class="t">span</b>&gt;
<span class="n">108</span>                     &lt;<b class="t">span</b> <b>class</b>=&quot;<i>btn btn-info btn-xs deselect-all</i>&quot; <b>style</b>=&quot;<i>border-radius: 0</i>&quot;&gt;Deselect all&lt;/<b class="t">span</b>&gt;
<span class="n">109</span>                 &lt;/<b class="t">div</b>&gt;
<span class="n">110</span>                 &lt;<b class="t">select</b> <b>class</b>=&quot;<i>form-control select2 </i>&quot; <b>name</b>=&quot;<i>roles[]</i>&quot; <b>id</b>=&quot;<i>roles</i>&quot; <b>multiple</b> <b>required</b>&gt;
<span class="n">111</span>                                             &lt;<b class="t">option</b> <b>value</b>=&quot;<i>2</i>&quot; &gt;User&lt;/<b class="t">option</b>&gt;
<span class="n">112</span>                                             &lt;<b class="t">option</b> <b>value</b>=&quot;<i>3</i>&quot; &gt;Staff&lt;/<b class="t">option</b>&gt;
<span class="n">113</span>                                     &lt;/<b class="t">select</b>&gt;
<span class="n">114</span>                                 &lt;<b class="t">span</b> <b>class</b>=&quot;<i>help-block</i>&quot;&gt; &lt;/<b class="t">span</b>&gt;
<span class="n">115</span>             &lt;/<b class="t">div</b>&gt;
<span class="n">116</span>             &lt;<b class="t">div</b> <b>class</b>=&quot;<i>form-group</i>&quot;&gt;
<span class="n">117</span>                 &lt;<b class="t">button</b> <b>class</b>=&quot;<i>btn btn-danger</i>&quot; <b>type</b>=&quot;<i>submit</i>&quot;&gt;
<span class="n">118</span>                     Save
<span class="n">119</span>                 &lt;/<b class="t">button</b>&gt;
<span class="n">120</span>             &lt;/<b class="t">div</b>&gt;
<span class="n">121</span>         &lt;/<b class="t">form</b>&gt;
<span class="n">122</span>     &lt;/<b class="t">div</b>&gt;
<span class="n">123</span> &lt;/<b class="t">div</b>&gt;</pre></div>
<div id="texts">
<div class="tx" style="left:243.69px;top:9.00px;font-size:15.5px;line-height:15.5px;color:#dbe4f5;letter-spacing:0.000px;">1</div>
<div class="tx" style="left:275.69px;top:9.00px;font-size:15.5px;line-height:15.5px;color:#dbe4f5;letter-spacing:0.000px;">2</div>
<div class="tx" style="left:307.69px;top:9.00px;font-size:15.5px;line-height:15.5px;color:#dbe4f5;letter-spacing:0.000px;">3</div>
<div class="tx" style="left:338.99px;top:9.00px;font-size:15.5px;line-height:15.5px;color:#dbe4f5;letter-spacing:0.000px;">4</div>
<div class="tx" style="left:1766.00px;top:9.00px;font-size:15px;line-height:15px;color:#dbe4f5;letter-spacing:-0.887px;">12:56</div>
<div class="tx" style="left:95.50px;top:50.00px;font-size:15px;line-height:15px;color:#f0f0f4;letter-spacing:-0.056px;width:190px;overflow:hidden;-webkit-mask-image:linear-gradient(to right,#000 158px,transparent 188px);mask-image:linear-gradient(to right,#000 158px,transparent 188px);">http://127.0.0.1:8000/admin/users/create</div>
<div class="tx" style="left:301.00px;top:93.00px;font-size:16px;line-height:16px;color:#f0f0f4;letter-spacing:-0.159px;">view-source:http://127.0.0.1:8000/admin/users/create</div>
<div class="tx" style="left:1433.50px;top:95.00px;font-size:12.6px;line-height:12.6px;color:#dcdce0;letter-spacing:-0.073px;">140%</div>
<div class="tx" style="left:32.50px;top:128.00px;font-size:15.5px;line-height:15.5px;color:#f0f0f4;letter-spacing:-0.378px;">Import bookmarks…</div>
<div class="tx" style="left:199.50px;top:128.00px;font-size:15.5px;line-height:15.5px;color:#f0f0f4;letter-spacing:-0.691px;">Kali Linux</div>
<div class="tx" style="left:293.00px;top:128.00px;font-size:15.5px;line-height:15.5px;color:#f0f0f4;letter-spacing:-0.396px;">Kali Tools</div>
<div class="tx" style="left:388.00px;top:128.00px;font-size:15.5px;line-height:15.5px;color:#f0f0f4;letter-spacing:-0.809px;">Kali Docs</div>
<div class="tx" style="left:480.00px;top:128.00px;font-size:15.5px;line-height:15.5px;color:#f0f0f4;letter-spacing:-0.569px;">Kali Forums</div>
<div class="tx" style="left:589.50px;top:128.00px;font-size:15.5px;line-height:15.5px;color:#f0f0f4;letter-spacing:-0.331px;">Kali NetHunter</div>
<div class="tx" style="left:718.50px;top:128.00px;font-size:15.5px;line-height:15.5px;color:#f0f0f4;letter-spacing:-0.302px;">Exploit-DB</div>
<div class="tx" style="left:821.50px;top:128.00px;font-size:15.5px;line-height:15.5px;color:#f0f0f4;letter-spacing:-0.664px;">Google Hacking DB</div>
<div class="tx" style="left:979.50px;top:128.00px;font-size:15.5px;line-height:15.5px;color:#f0f0f4;letter-spacing:-0.722px;">OffSec</div>
<div class="tx" style="left:1055.00px;top:128.00px;font-size:15.5px;line-height:15.5px;color:#f0f0f4;letter-spacing:-0.741px;">TryHackMe | Request …</div>
<div class="tx" style="left:1250.00px;top:128.00px;font-size:15.5px;line-height:15.5px;color:#f0f0f4;letter-spacing:-0.483px;">Try or buy a Microsoft …</div>
<div class="tx" style="left:1444.50px;top:128.00px;font-size:15.5px;line-height:15.5px;color:#f0f0f4;letter-spacing:-0.485px;">exercise - Training | Mi…</div>
</div>
</body>
</html>
